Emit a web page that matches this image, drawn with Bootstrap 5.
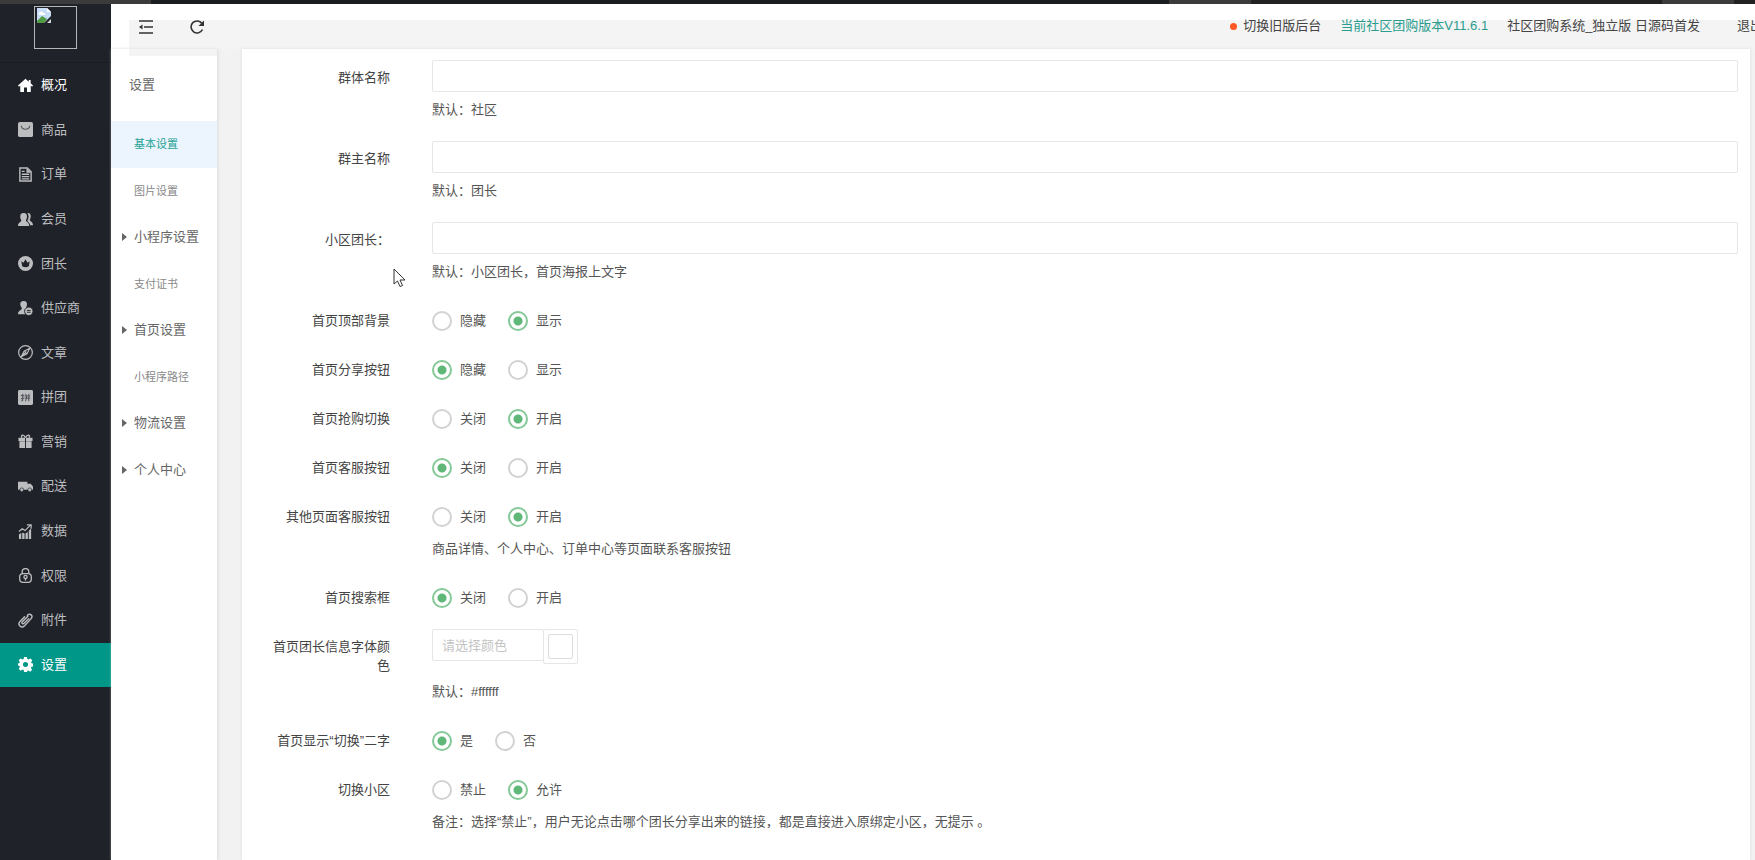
<!DOCTYPE html>
<html lang="zh-CN">
<head>
<meta charset="utf-8">
<meta name="viewport" content="width=device-width, initial-scale=1">
<title>社区团购系统</title>
<link rel="stylesheet" href="https://cdn.jsdelivr.net/npm/bootstrap@5.3.0/dist/css/bootstrap.min.css">
<style>
  body { font: 13px/20px "Liberation Sans", "Noto Sans CJK SC", sans-serif; color: #444; background: #f2f2f2; }
  a { text-decoration: none; color: inherit; }
  .shell { min-height: 100vh; }
  .top-strip { height: 4px; background: linear-gradient(90deg, #3b3b3b 0 8.6%, #1a1e21 8.6% 66.6%, #3b3b3b 66.6% 71.3%, #222 71.3% 94.7%, #3b3b3b 94.7% 98.8%, #222 98.8%); }

  .side { width: 111px; background: #20222a; color: #bcbdbf; }
  .logo { height: 59px; padding: 2px 1px 0 0; border-bottom: 1px solid #1a1c22; }
  .logo span { width: 43px; height: 43px; border: 1px solid #b5b6b8; padding: 1px; }
  .side-menu { height: 624px; }
  .side-menu a { padding-left: 18px; gap: 8px; }
  .side-menu svg { width: 15px; height: 15px; fill: currentColor; flex: none; }
  .side-menu .bright { color: #fff; }
  .side-menu .current { background: #009688; color: #fff; }

  .topbar { height: 45px; background: #fff; padding-top: 16px; padding-left: 18px; }
  .topbar-inner { background: #f4f4f4; height: 29px; white-space: nowrap; padding-left: 9px; }
  .topbar-inner > * { height: 14px; }
  .topbar button { width: 15px; height: 15px; color: #333; margin-right: 37px; }
  .top-links { line-height: 12px; gap: 19px; margin-right: -8px; color: #444; }
  .top-links a { height: 12px; }
  .top-links .version { color: #2a9d8f; }
  .top-links .leave { margin-left: 18px; }
  .dot { width: 7px; height: 7px; background: #ff5722; margin-right: 6px; }

  .submenu { width: 106px; background: #fff; box-shadow: 1px 0 3px #ddd; }
  .submenu-cap { height: 7px; margin-left: 18px; background: #f4f4f4; }
  .submenu h2 { font-size: 13px; line-height: 20px; margin: 19px 0 26px 18px; color: #666; font-weight: 400; }
  .submenu ul { height: 372px; color: #666; }
  .submenu li a { padding-left: 23px; }
  .submenu .leaf { font-size: 11px; color: #888; }
  .submenu .chosen { background: #ecf4fd; color: #1fa396; }
  .submenu .branch { padding-left: 11px; gap: 7px; }
  .submenu .branch::before { content: ""; border: 4px solid transparent; border-left: 5px solid #666; border-right: 0; }

  .panel { margin: 0 5px 0 25px; padding: 11px 12px 0 28px; background: #fff; box-shadow: 0 0 3px #ddd; }
  .form-line { gap: 42px; margin-bottom: 15px; }
  .line-title { width: 120px; flex: none; padding-top: 8px; line-height: 19px; text-align: right; color: #444; }
  .box { height: 32px; border: 1px solid #e6e6e6; border-radius: 2px; padding: 0 9px; font-size: 13px; color: #444; }
  .box::placeholder { color: #c4c4c4; }
  .tip { color: #555; margin: 6px 0; }
  .box + .tip { margin: 8px 0 6px; }
  .options { height: 34px; padding-top: 2px; gap: 22px; }
  .options label { gap: 8px; color: #555; }
  .options .form-check-input { width: 20px; height: 20px; margin: 0; border: 2px solid #d2d2d2; background: #fff; }
  .options .form-check-input:checked { border-color: #84c997; background: radial-gradient(circle, #5fb878 0 4px, #fff 5px); }
  .color-box { width: 112px; }
  .swatch { width: 35px; height: 35px; padding: 4px; border: 1px solid #e6e6e6; border-radius: 2px; background: #fff; margin-left: -1px; }
  .swatch span { height: 25px; width: 25px; border: 1px solid #ddd; border-radius: 2px; }
  .color-tip { margin: 18px 0 6px; }
  .pointer { left: 393px; top: 268px; }
</style>
</head>
<body>
<div class="shell d-flex flex-column overflow-hidden">
  <div class="top-strip"></div>
  <div class="d-flex flex-fill">

    <nav class="side flex-shrink-0">
      <div class="logo d-flex justify-content-center">
        <span class="d-block"><svg class="d-block" width="16" height="16" viewBox="0 0 16 16"><path fill="#c9dcf8" d="M1 0h10l4 4v5l-6 6H1z"/><path fill="#fff" d="M3 6c0-3 4-3 4-1 3 0 3 2 1 2H3zM11 0v4h4z"/><path fill="#4f9c45" d="M1 13l5-5 5 3-3 4H1z"/><path fill="#20222a" d="M16 7l-8 8 1 1h7z"/><path fill="#d5d7da" d="M11 15l4-4v4z"/></svg></span>
      </div>
      <ul class="side-menu list-unstyled d-flex flex-column mb-0">
        <li class="flex-fill d-flex"><a href="#" class="bright w-100 d-flex align-items-center"><svg viewBox="0 0 16 16"><path d="M8 .8L0 8l1 1.200L2.400 8v7h4v-5h3.200v5h4V8L15 9.200 16 8l-2.500-2.300V2h-2v2z"/></svg>概况</a></li>
        <li class="flex-fill d-flex"><a href="#" class="w-100 d-flex align-items-center"><svg viewBox="0 0 16 16"><rect width="16" height="16" rx="2"/><path d="M3.500 4c.5 5 8.500 5 9 0" fill="none" stroke="#55565c" stroke-width="1.200"/></svg>商品</a></li>
        <li class="flex-fill d-flex"><a href="#" class="w-100 d-flex align-items-center"><svg viewBox="0 0 16 16"><path fill="none" stroke="currentColor" stroke-width="1.500" d="M2 1h8l4 4v10H2z"/><path d="M9 1v5h5zM4 4h3v1.300H4zM4 7h8v1.600H4zM4 9.500h8v1.300H4zM4 12h8v1.300H4z"/></svg>订单</a></li>
        <li class="flex-fill d-flex"><a href="#" class="w-100 d-flex align-items-center"><svg viewBox="0 0 16 16"><path d="M6 1c3 0 4 2 3.500 5-.3 1.500-1 2-1 3 0 1.500 3.500 1.500 3.500 6H0c0-4.500 3.500-4 3.500-6 0-1-.8-1.500-1-3C2 3 3 1 6 1z"/><path d="M10 1c3-.3 4 2 3.500 4.500-.3 1.500-1 2-1 3 0 1.500 3.500 1.500 3.500 5.500h-3c-.3-3-3.200-4-3-5 1.500-2 2-5 0-8z"/></svg>会员</a></li>
        <li class="flex-fill d-flex"><a href="#" class="w-100 d-flex align-items-center"><svg viewBox="0 0 16 16"><circle cx="8" cy="8" r="8"/><path fill="#20222a" d="M3.500 5.500l2.300 1.700L8 3.500l2.200 3.700 2.300-1.700-1 5.500c-2 1.500-5 1.500-7 0z"/></svg>团长</a></li>
        <li class="flex-fill d-flex"><a href="#" class="w-100 d-flex align-items-center"><svg viewBox="0 0 16 16"><path d="M6 0c3 0 4 2 3.500 4.500C9.200 6 8.500 6.500 8.500 8L10 9l-2 5H0c0-4 4-4 4-6 0-1.500-1-2-1.500-3.500C2 2 3 0 6 0z"/><circle cx="11.500" cy="11" r="4.500" stroke="#20222a"/><path fill="none" stroke="#20222a" d="M9.500 10h4M9.500 12h4"/></svg>供应商</a></li>
        <li class="flex-fill d-flex"><a href="#" class="w-100 d-flex align-items-center"><svg viewBox="0 0 16 16"><g fill="none" stroke="currentColor" stroke-width="1.300"><circle cx="8" cy="8" r="7.300"/><path d="M12.500 3.500L9.500 9.500l-6 3 3-6zM6.500 6.500l3 3M4 12l5-5"/></g></svg>文章</a></li>
        <li class="flex-fill d-flex"><a href="#" class="w-100 d-flex align-items-center"><svg viewBox="0 0 16 16"><rect width="16" height="16" rx="1.500"/><path fill="none" stroke="#4b4c53" d="M3 6h3.500M5 4v7.500H3.500M3 9.500l3.500-1M8 4l.8 1.500M12 4l-.8 1.500M7 6.300h6M7 8.700h6M9 6v3l-1 3M11.500 6v6"/></svg>拼团</a></li>
        <li class="flex-fill d-flex"><a href="#" class="w-100 d-flex align-items-center"><svg viewBox="0 0 16 16"><path d="M.5 4h7v3.500h-7zM8.500 4h7v3.500h-7zM1.500 7.800h6V15h-6zM8.500 7.800h6V15h-6z"/><path fill="none" stroke="currentColor" stroke-width="1.500" d="M8 4C6 0 3 .5 4 4M8 4c2-4 5-3.500 4 0"/></svg>营销</a></li>
        <li class="flex-fill d-flex"><a href="#" class="w-100 d-flex align-items-center"><svg viewBox="0 0 16 16"><path d="M0 3h10v8.500H0zM10 5h3.500L16 8v3.500h-6z"/><circle cx="4" cy="11.500" r="2" stroke="#20222a" stroke-width=".7"/><circle cx="12.500" cy="11.500" r="2" stroke="#20222a" stroke-width=".7"/></svg>配送</a></li>
        <li class="flex-fill d-flex"><a href="#" class="w-100 d-flex align-items-center"><svg viewBox="0 0 16 16"><path d="M1 11l2.500-1.500V16H1zM4.500 9L7 10v6H4.500zM8 10l2.500-1.500V16H8zM11.500 7L14 5v11h-2.500z"/><path fill="none" stroke="currentColor" stroke-width="1.300" d="M1 8l3.500-3 3 2L13 1.500M9.500 1H14v4"/></svg>数据</a></li>
        <li class="flex-fill d-flex"><a href="#" class="w-100 d-flex align-items-center"><svg viewBox="0 0 16 16"><g fill="none" stroke="currentColor" stroke-width="1.400"><path d="M4.500 6V4c0-4.500 7-4.500 7 0v2"/><rect x="1.800" y="6" width="12.400" height="9.300" rx="3.500"/><circle cx="8" cy="9.500" r="1.700"/><path d="M8 11v2.500"/></g></svg>权限</a></li>
        <li class="flex-fill d-flex"><a href="#" class="w-100 d-flex align-items-center"><svg viewBox="0 0 16 16"><path fill="none" stroke="currentColor" stroke-width="1.500" stroke-linecap="round" d="M11.500 6L6.500 11c-1.500 1.300-3-.2-1.800-1.700l5.800-5.800M10 2.500c3-3 6.500.5 4 3.500l-7 7.500c-3.500 3.500-8-1-4.800-4.500L7 4"/></svg>附件</a></li>
        <li class="flex-fill d-flex"><a href="#" class="current w-100 d-flex align-items-center"><svg viewBox="0 0 16 16"><path fill-rule="evenodd" d="M6.500 0h3l.5 2.200 1.200.5 2-1.200 2 2-1.200 2 .5 1.200 1.500.3v3l-1.700.4-.5 1.200 1.200 2-2 2-2-1.200-1 .4L9.500 16h-3L6 13.800l-1.200-.4-2 1.200-2-2 1.200-2L1.600 9.500 0 9V7l1.600-.5.4-1-1.200-2 2-2 2 1.200L6 2.200zM8 5.300a2.700 2.700 0 100 5.400 2.700 2.700 0 000-5.400z"/></svg>设置</a></li>
      </ul>
    </nav>

    <div class="d-flex flex-column flex-fill">
      <header class="topbar">
        <div class="topbar-inner d-flex">
          <button type="button" class="btn p-0 border-0 d-flex" aria-label="收起菜单"><svg width="15" height="14" viewBox="0 0 15 14"><path fill="none" stroke="currentColor" stroke-width="1.500" d="M1 1h14M6 7h9M1 13h14"/><path fill="currentColor" d="M4.500 4.500v5L1 7z"/></svg></button>
          <button type="button" class="btn p-0 border-0 d-flex" aria-label="刷新"><svg width="15" height="14" viewBox="0 0 15 14"><path fill="none" stroke="currentColor" stroke-width="1.600" d="M12.500 9.500A6 6 0 1 1 12 3.500"/><path fill="currentColor" d="M14 .5V6H8.500z"/></svg></button>
          <div class="top-links d-flex ms-auto">
            <a href="#" class="d-flex align-items-center"><span class="dot rounded-circle"></span>切换旧版后台</a>
            <a href="#" class="version">当前社区团购版本V11.6.1</a>
            <a href="#">社区团购系统_独立版 日源码首发</a>
            <a href="#" class="leave">退出</a>
          </div>
        </div>
      </header>

      <div class="d-flex flex-fill">
        <aside class="submenu flex-shrink-0">
          <div class="submenu-cap"></div>
          <h2>设置</h2>
          <ul class="list-unstyled d-flex flex-column mb-0">
            <li class="flex-fill d-flex"><a href="#" class="leaf chosen w-100 d-flex align-items-center">基本设置</a></li>
            <li class="flex-fill d-flex"><a href="#" class="leaf w-100 d-flex align-items-center">图片设置</a></li>
            <li class="flex-fill d-flex"><a href="#" class="branch w-100 d-flex align-items-center">小程序设置</a></li>
            <li class="flex-fill d-flex"><a href="#" class="leaf w-100 d-flex align-items-center">支付证书</a></li>
            <li class="flex-fill d-flex"><a href="#" class="branch w-100 d-flex align-items-center">首页设置</a></li>
            <li class="flex-fill d-flex"><a href="#" class="leaf w-100 d-flex align-items-center">小程序路径</a></li>
            <li class="flex-fill d-flex"><a href="#" class="branch w-100 d-flex align-items-center">物流设置</a></li>
            <li class="flex-fill d-flex"><a href="#" class="branch w-100 d-flex align-items-center">个人中心</a></li>
          </ul>
        </aside>

        <main class="panel flex-fill">
          <form>
            <div class="form-line d-flex">
              <label class="line-title" for="group-name">群体名称</label>
              <div class="flex-fill"><input type="text" class="box form-control" id="group-name"><div class="tip">默认：社区</div></div>
            </div>
            <div class="form-line d-flex">
              <label class="line-title" for="owner-name">群主名称</label>
              <div class="flex-fill"><input type="text" class="box form-control" id="owner-name"><div class="tip">默认：团长</div></div>
            </div>
            <div class="form-line d-flex">
              <label class="line-title" for="leader-name">小区团长：</label>
              <div class="flex-fill"><input type="text" class="box form-control" id="leader-name"><div class="tip">默认：小区团长，首页海报上文字</div></div>
            </div>
            <div class="form-line d-flex" role="radiogroup" aria-labelledby="t-bg">
              <div class="line-title" id="t-bg">首页顶部背景</div>
              <div class="options d-flex">
                <label class="d-flex align-items-center"><input class="form-check-input" type="radio" name="bg">隐藏</label>
                <label class="d-flex align-items-center"><input class="form-check-input" type="radio" name="bg" checked>显示</label>
              </div>
            </div>
            <div class="form-line d-flex" role="radiogroup" aria-labelledby="t-share">
              <div class="line-title" id="t-share">首页分享按钮</div>
              <div class="options d-flex">
                <label class="d-flex align-items-center"><input class="form-check-input" type="radio" name="share" checked>隐藏</label>
                <label class="d-flex align-items-center"><input class="form-check-input" type="radio" name="share">显示</label>
              </div>
            </div>
            <div class="form-line d-flex" role="radiogroup" aria-labelledby="t-rush">
              <div class="line-title" id="t-rush">首页抢购切换</div>
              <div class="options d-flex">
                <label class="d-flex align-items-center"><input class="form-check-input" type="radio" name="rush">关闭</label>
                <label class="d-flex align-items-center"><input class="form-check-input" type="radio" name="rush" checked>开启</label>
              </div>
            </div>
            <div class="form-line d-flex" role="radiogroup" aria-labelledby="t-service">
              <div class="line-title" id="t-service">首页客服按钮</div>
              <div class="options d-flex">
                <label class="d-flex align-items-center"><input class="form-check-input" type="radio" name="service" checked>关闭</label>
                <label class="d-flex align-items-center"><input class="form-check-input" type="radio" name="service">开启</label>
              </div>
            </div>
            <div class="form-line d-flex" role="radiogroup" aria-labelledby="t-other">
              <div class="line-title" id="t-other">其他页面客服按钮</div>
              <div>
                <div class="options d-flex">
                  <label class="d-flex align-items-center"><input class="form-check-input" type="radio" name="other">关闭</label>
                  <label class="d-flex align-items-center"><input class="form-check-input" type="radio" name="other" checked>开启</label>
                </div>
                <div class="tip">商品详情、个人中心、订单中心等页面联系客服按钮</div>
              </div>
            </div>
            <div class="form-line d-flex" role="radiogroup" aria-labelledby="t-search">
              <div class="line-title" id="t-search">首页搜索框</div>
              <div class="options d-flex">
                <label class="d-flex align-items-center"><input class="form-check-input" type="radio" name="search" checked>关闭</label>
                <label class="d-flex align-items-center"><input class="form-check-input" type="radio" name="search">开启</label>
              </div>
            </div>
            <div class="form-line d-flex">
              <label class="line-title" for="font-color">首页团长信息字体颜色</label>
              <div>
                <div class="d-flex">
                  <input type="text" class="box color-box form-control" id="font-color" placeholder="请选择颜色">
                  <button type="button" class="swatch d-flex align-items-center justify-content-center" aria-label="选择颜色"><span class="d-block"></span></button>
                </div>
                <div class="tip color-tip">默认：#ffffff</div>
              </div>
            </div>
            <div class="form-line d-flex" role="radiogroup" aria-labelledby="t-word">
              <div class="line-title" id="t-word">首页显示“切换”二字</div>
              <div class="options d-flex">
                <label class="d-flex align-items-center"><input class="form-check-input" type="radio" name="word" checked>是</label>
                <label class="d-flex align-items-center"><input class="form-check-input" type="radio" name="word">否</label>
              </div>
            </div>
            <div class="form-line d-flex mb-0" role="radiogroup" aria-labelledby="t-switch">
              <div class="line-title" id="t-switch">切换小区</div>
              <div>
                <div class="options d-flex">
                  <label class="d-flex align-items-center"><input class="form-check-input" type="radio" name="switch">禁止</label>
                  <label class="d-flex align-items-center"><input class="form-check-input" type="radio" name="switch" checked>允许</label>
                </div>
                <div class="tip">备注：选择“禁止”，用户无论点击哪个团长分享出来的链接，都是直接进入原绑定小区，无提示 。</div>
              </div>
            </div>
          </form>
        </main>
      </div>
    </div>
  </div>
</div>
<svg class="pointer position-absolute pe-none" width="13" height="20" viewBox="0 0 13 20"><path fill="#fff" stroke="#333" d="M1 1v15l3.500-3 2.500 5.500 2.500-1L7 12h5z"/></svg>
<script src="https://cdn.jsdelivr.net/npm/bootstrap@5.3.0/dist/js/bootstrap.bundle.min.js"></script>
</body>
</html>
